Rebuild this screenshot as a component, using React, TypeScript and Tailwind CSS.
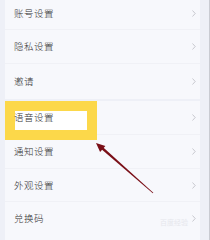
import React from 'react';

const font = { fontFamily: '"Noto Sans CJK SC", "Noto Sans", sans-serif' };

const Chevron = () => (
  <svg width="4" height="7" viewBox="0 0 4 7" className="shrink-0">
    <polyline points="0.5,0.5 3.2,3.5 0.5,6.5" fill="none" stroke="#b3b5bc" strokeWidth="0.7" />
  </svg>
);

const Row = ({ label, h, last, raised }: { label: string; h: string; last?: boolean; raised?: boolean }) => (
  <div className={`flex items-center justify-between pl-[9px] pr-[4px] ${h} ${last ? '' : 'border-b border-[#f0f1f6]'}`}>
    <span className={`text-[9.5px] font-light tracking-[0.5px] text-[#333333] ${raised ? 'relative z-10' : ''}`}>{label}</span>
    <Chevron />
  </div>
);

export default function App() {
  return (
    <div className="relative w-[210px] h-[240px] overflow-hidden bg-[#eef0f7] border-r border-[#c9cbd2]" style={font}>
      <div className="flex flex-col gap-[2px] pl-[5px] pr-[9px] mt-[-3px]">
        <div className="flex flex-col bg-[#f7f8fc]">
          <Row label="账号设置" h="h-[33px]" />
          <Row label="隐私设置" h="h-[34px]" />
          <Row label="邀请" h="h-[35px]" last />
        </div>
        <div className="flex flex-col bg-[#f7f8fc] h-[150px]">
          <Row label="语音设置" h="h-[34px]" raised />
          <Row label="通知设置" h="h-[34px]" />
          <Row label="外观设置" h="h-[33px]" />
          <Row label="兑换码" h="h-[33px]" last />
        </div>
      </div>

      <div className="absolute left-[5px] top-[101px] w-[92px] h-[39px] border-[10px] border-[#fcd84a] bg-white" />

      <span className="absolute left-[160px] top-[217px] text-[7px] text-[#e6e7ec]">百度经验</span>

      <svg className="absolute inset-0" width="210" height="240" viewBox="0 0 210 240">
        <polygon points="102.8,147.1 153.3,192.8 152.8,193.3 101.2,148.9" fill="#7a0f17" />
        <polygon points="96,143 105.4,145.9 100.1,151.9" fill="#7a0f17" />
      </svg>
    </div>
  );
}
